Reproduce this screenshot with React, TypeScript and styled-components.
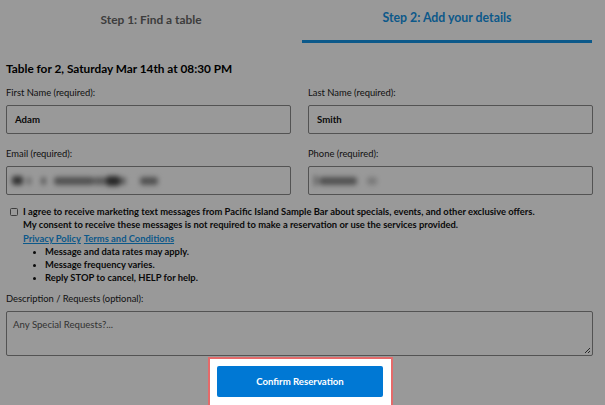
import React from "react";
import styled, { createGlobalStyle } from "styled-components";

const Global = createGlobalStyle`
  html, body { margin: 0; padding: 0; background: #fff; }
  body { font-family: Lato, "Open Sans", Arial, sans-serif; color: #000; overflow: hidden; }
  * { box-sizing: border-box; }
`;

const Page = styled.div`
  width: 605px;
  height: 405px;
  position: relative;
  overflow: hidden;
  background: #fff;
`;

const Tabs = styled.div`
  display: grid;
  grid-template-columns: 302px 290px;
  height: 43px;
`;

const Tab = styled.div<{ $active?: boolean }>`
  display: flex;
  justify-content: center;
  align-items: flex-start;
  padding-top: ${(p) => (p.$active ? "10px" : "12px")};
  font-size: ${(p) => (p.$active ? "12.3px" : "11.9px")};
  font-weight: 700;
  color: ${(p) => (p.$active ? "#1494e6" : "#666")};
  border-bottom: 3px solid ${(p) => (p.$active ? "#1494e6" : "transparent")};
  height: 43px;
`;

const Content = styled.div`
  padding: 18px 12px 0 6px;
`;

const Heading = styled.h2`
  margin: 0 0 9px;
  font-size: 11.8px;
  font-weight: 700;
  line-height: 16px;
  color: #000;
`;

const Grid = styled.div`
  display: grid;
  grid-template-columns: 285px 285px;
  column-gap: 17px;
  row-gap: 13px;
`;

const Field = styled.div`
  display: flex;
  flex-direction: column;
`;

const Label = styled.label`
  font-size: 9.4px;
  line-height: 13px;
  color: #222;
  margin-bottom: 6px;
`;

const Input = styled.div`
  height: 29px;
  border: 1px solid #8a8a8a;
  border-radius: 2px;
  display: flex;
  align-items: center;
  padding: 0 8px;
  font-size: 9.6px;
  font-weight: 700;
  color: #111;
  overflow: hidden;
`;

const Blurred = styled.span`
  display: flex;
  align-items: center;
  filter: blur(2.6px);
  white-space: nowrap;
  margin-left: -3px;
`;

const Blob = styled.span<{ $w: number; $gap: number; $shade: string; $h?: number }>`
  display: inline-block;
  width: ${(p) => p.$w}px;
  height: ${(p) => p.$h ?? 8}px;
  margin-left: ${(p) => p.$gap}px;
  background: ${(p) => p.$shade};
  border-radius: 3px;
`;

const Consent = styled.div`
  display: flex;
  gap: 5px;
  margin-top: 10px;
  margin-left: 4px;
`;

const Box = styled.span`
  width: 8px;
  height: 8px;
  border: 1px solid #666;
  border-radius: 1.5px;
  margin-top: 3px;
  flex-shrink: 0;
  background: #fff;
`;

const ConsentText = styled.div`
  font-size: 9.4px;
  font-weight: 700;
  line-height: 13.3px;
  color: #111;
`;

const Links = styled.div`
  display: flex;
  gap: 3px;
`;

const Link = styled.a`
  color: #1494e6;
  text-decoration: underline;
`;

const Bullets = styled.ul`
  margin: 0;
  padding-left: 22px;
  list-style: disc;
  li::marker { font-size: 8px; }
`;

const Area = styled.div`
  margin-top: 7px;
  display: flex;
  flex-direction: column;
`;

const TextArea = styled.div`
  position: relative;
  height: 45px;
  border: 1px solid #8a8a8a;
  border-radius: 2px;
  padding: 7px 6px;
  font-size: 9.6px;
  color: #555;
`;

const Grip = styled.svg`
  position: absolute;
  right: 1px;
  bottom: 1px;
`;

const ButtonRow = styled.div`
  display: flex;
  justify-content: center;
  margin-top: 1px;
  padding-left: 2px;
`;

const Spotlight = styled.div`
  position: relative;
  z-index: 2;
  background: #fff;
  border: 2px solid #e46a6a;
  padding: 7px 8px 8px 7px;
  box-shadow: 0 0 0 2000px rgba(0, 0, 0, 0.4);
`;

const Button = styled.button`
  width: 166px;
  height: 31px;
  border: none;
  border-radius: 2px;
  background: #0078d4;
  color: #fff;
  font-family: inherit;
  font-size: 9.6px;
  font-weight: 700;
  display: block;
`;

export default function App() {
  return (
    <Page>
      <Global />
      <Tabs>
        <Tab>Step 1: Find a table</Tab>
        <Tab $active>Step 2: Add your details</Tab>
      </Tabs>
      <Content>
        <Heading>Table for 2, Saturday Mar 14th at 08:30 PM</Heading>
        <Grid>
          <Field>
            <Label>First Name (required):</Label>
            <Input>Adam</Input>
          </Field>
          <Field>
            <Label>Last Name (required):</Label>
            <Input>Smith</Input>
          </Field>
          <Field>
            <Label>Email (required):</Label>
            <Input>
              <Blurred aria-label="email (blurred)">
                <Blob $w={11} $gap={0} $shade="#555" $h={9} />
                <Blob $w={4} $gap={4} $shade="#aaa" />
                <Blob $w={5} $gap={10} $shade="#999" />
                <Blob $w={40} $gap={8} $shade="#888" />
                <Blob $w={12} $gap={0} $shade="#999" />
                <Blob $w={14} $gap={0} $shade="#444" $h={10} />
                <Blob $w={6} $gap={0} $shade="#999" />
                <Blob $w={18} $gap={14} $shade="#888" />
              </Blurred>
            </Input>
          </Field>
          <Field>
            <Label>Phone (required):</Label>
            <Input>
              <Blurred aria-label="phone (blurred)">
                <Blob $w={3} $gap={0} $shade="#999" $h={11} />
                <Blob $w={38} $gap={2} $shade="#888" />
                <Blob $w={10} $gap={10} $shade="#ccc" />
              </Blurred>
            </Input>
          </Field>
        </Grid>
        <Consent>
          <Box />
          <ConsentText>
            <div>
              I agree to receive marketing text messages from Pacific Island Sample Bar about specials, events, and other exclusive offers.
            </div>
            <div>
              My consent to receive these messages is not required to make a reservation or use the services provided.
            </div>
            <Links>
              <Link>Privacy Policy</Link>
              <Link>Terms and Conditions</Link>
            </Links>
            <Bullets>
              <li>Message and data rates may apply.</li>
              <li>Message frequency varies.</li>
              <li>Reply STOP to cancel, HELP for help.</li>
            </Bullets>
          </ConsentText>
        </Consent>
        <Area>
          <Label>Description / Requests (optional):</Label>
          <TextArea>
            Any Special Requests?...
            <Grip width="7" height="7" viewBox="0 0 7 7">
              <path d="M6 1 L1 6 M6 4 L4 6" stroke="#444" strokeWidth="1" />
            </Grip>
          </TextArea>
        </Area>
        <ButtonRow>
          <Spotlight>
            <Button>Confirm Reservation</Button>
          </Spotlight>
        </ButtonRow>
      </Content>
    </Page>
  );
}
